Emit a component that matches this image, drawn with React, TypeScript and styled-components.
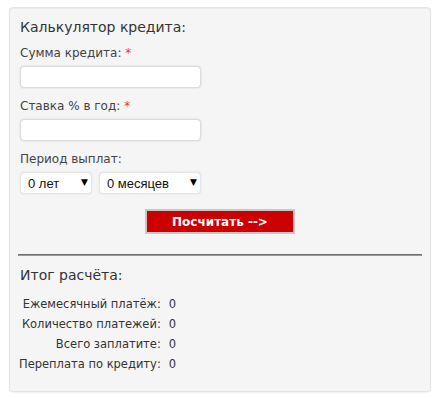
import { Fragment } from "react";
import styled, { createGlobalStyle } from "styled-components";

const GlobalStyle = createGlobalStyle`
    body {
        margin: 0;
        background: #fff;
        font-family: "DejaVu Sans", Verdana, sans-serif;
        color: #333;
    }
`;

const Well = styled.div`
    margin: 7px 9px;
    width: 422px;
    height: 385px;
    box-sizing: border-box;
    background-color: #f5f5f5;
    border: 1px solid #e3e3e3;
    border-radius: 4px;
    box-shadow: inset 0 1px 1px rgba(0, 0, 0, 0.05), 0 1px 2px rgba(0, 0, 0, 0.06);
    padding: 9px 10px;
`;

const Heading = styled.h3`
    margin: 0;
    font-size: 14px;
    font-weight: normal;
    line-height: 20px;
    color: #333;
`;

const Field = styled.div<{ $top: number }>`
    margin-top: ${(p) => p.$top}px;
`;

const Label = styled.label`
    display: block;
    font-size: 12px;
    line-height: 15px;
    color: #444;
    margin-bottom: 5px;
`;

const Required = styled.span`
    color: #e33;
`;

const TextInput = styled.input`
    display: block;
    width: 181px;
    height: 22px;
    box-sizing: border-box;
    border: 1px solid #dcdcdc;
    border-radius: 4px;
    background: #fff;
    box-shadow: 0 0 2px rgba(0, 0, 0, 0.15);
    outline: none;
`;

const SelectRow = styled.div`
    display: flex;
    gap: 7px;
`;

const SelectWrap = styled.div<{ $w: number }>`
    position: relative;
    width: ${(p) => p.$w}px;
    &::after {
        content: "▼";
        position: absolute;
        right: 4px;
        top: 5px;
        font-size: 9px;
        color: #000;
        pointer-events: none;
    }
`;

const Select = styled.select`
    appearance: none;
    width: 100%;
    height: 22px;
    box-sizing: border-box;
    border: 1px solid #e6e6e6;
    border-radius: 4px;
    background: #fff;
    padding: 0 0 0 7px;
    font-family: "Liberation Sans", Arial, sans-serif;
    font-size: 13px;
    color: #111;
    box-shadow: 0 0 2px rgba(0, 0, 0, 0.1);
    outline: none;
`;

const ButtonRow = styled.div`
    display: flex;
    justify-content: center;
    margin-top: 15px;
`;

const CalcButton = styled.button`
    width: 150px;
    height: 25px;
    border: 2px solid #c8c8c8;
    background: #cc0000;
    color: #fff;
    font-family: "DejaVu Sans", Verdana, sans-serif;
    font-weight: bold;
    font-size: 12px;
    padding: 0;
    cursor: pointer;
`;

const Divider = styled.hr`
    margin: 20px -2px 0 -2px;
    border: none;
    border-top: 1px solid #6f6f6f;
    border-bottom: 1px solid #9a9a9a;
    height: 0;
`;

const ResultHeading = styled(Heading)`
    margin-top: 9px;
`;

const ResultTable = styled.div`
    display: grid;
    grid-template-columns: max-content auto;
    column-gap: 8px;
    row-gap: 5px;
    margin-top: 12px;
    margin-left: -1px;
    font-size: 11.5px;
    line-height: 15px;
    color: #333;
`;

const ResultLabel = styled.div`
    text-align: right;
`;

const ResultValue = styled.div``;

const results = [
    "Ежемесячный платёж:",
    "Количество платежей:",
    "Всего заплатите:",
    "Переплата по кредиту:",
];

export default function App() {
    return (
        <>
            <GlobalStyle />
            <Well>
                <Heading>Калькулятор кредита:</Heading>
                <Field $top={9}>
                    <Label>
                        Сумма кредита: <Required>*</Required>
                    </Label>
                    <TextInput type="text" />
                </Field>
                <Field $top={11}>
                    <Label>
                        Ставка % в год: <Required>*</Required>
                    </Label>
                    <TextInput type="text" />
                </Field>
                <Field $top={11}>
                    <Label>Период выплат:</Label>
                    <SelectRow>
                        <SelectWrap $w={72}>
                            <Select defaultValue="0">
                                <option value="0">0 лет</option>
                            </Select>
                        </SelectWrap>
                        <SelectWrap $w={102}>
                            <Select defaultValue="0">
                                <option value="0">0 месяцев</option>
                            </Select>
                        </SelectWrap>
                    </SelectRow>
                </Field>
                <ButtonRow>
                    <CalcButton>Посчитать --&gt;</CalcButton>
                </ButtonRow>
                <Divider />
                <ResultHeading>Итог расчёта:</ResultHeading>
                <ResultTable>
                    {results.map((r) => (
                        <Fragment key={r}>
                            <ResultLabel>{r}</ResultLabel>
                            <ResultValue>0</ResultValue>
                        </Fragment>
                    ))}
                </ResultTable>
            </Well>
        </>
    );
}
